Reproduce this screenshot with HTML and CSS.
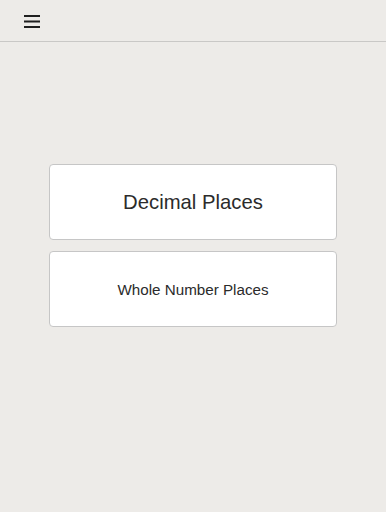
FILE: index.html
```html
<!DOCTYPE html>
<html lang="en">
<head>
<meta charset="utf-8">
<title>Places</title>
<link rel="stylesheet" href="styles.css">
</head>
<body>
<header class="topbar">
  <button class="menu-btn" aria-label="Menu">
    <svg width="16" height="14" viewBox="0 0 16 14" aria-hidden="true">
      <rect x="0" y="1" width="16" height="2" fill="#1f1f1f"/>
      <rect x="0" y="6.5" width="16" height="2" fill="#1f1f1f"/>
      <rect x="0" y="12" width="16" height="2" fill="#1f1f1f"/>
    </svg>
  </button>
</header>
<main class="content">
  <a class="option large" href="#">Decimal Places</a>
  <a class="option" href="#">Whole Number Places</a>
</main>
</body>
</html>
```
FILE: styles.css
```css
html, body {
  margin: 0;
  padding: 0;
  background: #edebe8;
  font-family: "Liberation Sans", Arial, sans-serif;
  color: #2b2b2b;
}
.topbar {
  height: 41px;
  border-bottom: 1px solid #c9c8c6;
  display: flex;
  align-items: center;
  padding-left: 24px;
}
.menu-btn {
  border: 0;
  background: none;
  padding: 0;
  display: flex;
  cursor: pointer;
}
.content {
  display: flex;
  flex-direction: column;
  gap: 11px;
  padding: 122px 49px 0 49px;
}
.option {
  height: 74px;
  border: 1px solid #c6c6c6;
  border-radius: 4px;
  background: #ffffff;
  display: flex;
  align-items: center;
  justify-content: center;
  text-decoration: none;
  color: #2b2b2b;
  font-size: 15.2px;
}
.option.large {
  font-size: 20.3px;
}
```
